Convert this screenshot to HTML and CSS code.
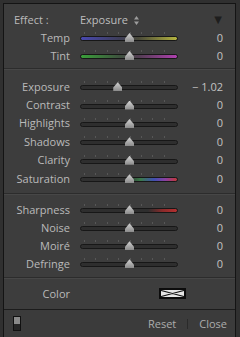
FILE: index.html
```html
<!DOCTYPE html>
<html lang="en">
<head>
    <meta charset="UTF-8">
    <title>Adjustment Brush</title>
    <link rel="stylesheet" href="styles.css">
</head>
<body>
    <div class="panel">
        <div class="section top">
            <div class="row effect">
                <span class="label">Effect :</span>
                <span class="preset">Exposure
                    <svg class="updown" width="5" height="9" viewBox="0 0 5 9">
                        <path d="M2.5 0 L5 3.5 L0 3.5 Z M2.5 9 L5 5.5 L0 5.5 Z" fill="#9c9c9c"/>
                    </svg>
                </span>
                <span class="collapse">&#9660;</span>
            </div>
            <div class="row">
                <span class="label">Temp</span>
                <div class="slider"><div class="track temp"></div><span class="thumb"></span></div>
                <span class="value">0</span>
            </div>
            <div class="row">
                <span class="label">Tint</span>
                <div class="slider"><div class="track tint"></div><span class="thumb"></span></div>
                <span class="value">0</span>
            </div>
        </div>

        <div class="section tone">
            <div class="row">
                <span class="label">Exposure</span>
                <div class="slider"><div class="track"></div><span class="thumb" style="left: 38%"></span></div>
                <span class="value">&minus; 1.02</span>
            </div>
            <div class="row">
                <span class="label">Contrast</span>
                <div class="slider"><div class="track"></div><span class="thumb"></span></div>
                <span class="value">0</span>
            </div>
            <div class="row">
                <span class="label">Highlights</span>
                <div class="slider"><div class="track"></div><span class="thumb"></span></div>
                <span class="value">0</span>
            </div>
            <div class="row">
                <span class="label">Shadows</span>
                <div class="slider"><div class="track"></div><span class="thumb"></span></div>
                <span class="value">0</span>
            </div>
            <div class="row">
                <span class="label">Clarity</span>
                <div class="slider"><div class="track"></div><span class="thumb"></span></div>
                <span class="value">0</span>
            </div>
            <div class="row">
                <span class="label">Saturation</span>
                <div class="slider"><div class="track saturation"></div><span class="thumb"></span></div>
                <span class="value">0</span>
            </div>
        </div>

        <div class="section detail">
            <div class="row">
                <span class="label">Sharpness</span>
                <div class="slider"><div class="track sharpness"></div><span class="thumb"></span></div>
                <span class="value">0</span>
            </div>
            <div class="row">
                <span class="label">Noise</span>
                <div class="slider"><div class="track"></div><span class="thumb"></span></div>
                <span class="value">0</span>
            </div>
            <div class="row">
                <span class="label">Moiré</span>
                <div class="slider"><div class="track"></div><span class="thumb"></span></div>
                <span class="value">0</span>
            </div>
            <div class="row">
                <span class="label">Defringe</span>
                <div class="slider"><div class="track"></div><span class="thumb"></span></div>
                <span class="value">0</span>
            </div>
        </div>

        <div class="section color">
            <div class="row">
                <span class="label">Color</span>
                <div class="swatch">
                    <svg width="23" height="7" viewBox="0 0 23 7">
                        <path d="M0 0.5 L11.5 3.5 L23 0.5 M0 6.5 L11.5 3.5 L23 6.5" stroke="#111" stroke-width="1.2" fill="none"/>
                    </svg>
                </div>
            </div>
        </div>

        <div class="footer">
            <span class="toggle"></span>
            <span class="spacer"></span>
            <span class="btn">Reset</span>
            <span class="divider"></span>
            <span class="btn">Close</span>
        </div>
    </div>
</body>
</html>
```

FILE: styles.css
```css
body {
    margin: 0;
    background-color: #303030;
    font-family: "Open Sans", "DejaVu Sans", sans-serif;
    font-size: 11px;
    color: #bcbcbc;
    overflow: hidden;
}
.panel {
    margin: 3px 4px 0 3px;
    height: 334px;
    box-sizing: border-box;
    border: 1px solid #141414;
    border-bottom: none;
    background-color: #3d3d3d;
    display: flex;
    flex-direction: column;
}
.section {
    border-bottom: 1px solid #2c2c2c;
    box-shadow: 0 1px 0 #474747;
}
.top {
    padding: 6px 0 4px;
}
.tone {
    padding: 8px 0 6px;
}
.tone .row {
    height: 18.4px;
}
.detail {
    padding: 6px 0 5px;
}
.color {
    padding: 6px 0 7px;
    border-bottom: 1px solid #1c1c1c;
    box-shadow: none;
}
.row {
    display: grid;
    grid-template-columns: 66px 98px 1fr;
    column-gap: 10px;
    align-items: center;
    height: 18px;
    padding-right: 12px;
}
.label {
    text-align: right;
    color: #bababa;
}
.value {
    text-align: right;
    color: #c2c2c2;
}
.effect .label {
    text-align: left;
    padding-left: 10px;
}
.preset {
    color: #bebebe;
}
.updown {
    margin-left: 3px;
    vertical-align: -1px;
}
.collapse {
    text-align: right;
    font-size: 10px;
    color: #1e1e1e;
    padding-right: 1px;
}
.slider {
    position: relative;
    height: 10px;
}
.slider::before {
    content: "";
    position: absolute;
    left: 4px;
    right: 3px;
    top: 0;
    height: 2px;
    background: repeating-linear-gradient(to right, #575757 0 1px, transparent 1px 11.4px);
}
.track {
    position: absolute;
    left: 0;
    right: 0;
    top: 4px;
    height: 5px;
    box-sizing: border-box;
    border: 1px solid #171717;
    border-radius: 3px;
    background-color: #2e2e2e;
}
.track.temp {
    background: linear-gradient(to right, #4848b0, #3e3e58 40%, #4a4a3a 60%, #b4b440);
}
.track.tint {
    background: linear-gradient(to right, #3aa03a, #3e523e 40%, #523e52 60%, #b040b0);
}
.track.saturation {
    background: linear-gradient(to right, #303030 48%, #3a7a4a 62%, #4050b0 76%, #8a40a0 88%, #c03838);
}
.track.sharpness {
    background: linear-gradient(to right, #2e2e2e 70%, #8a2a2a 85%, #b43030);
}
.thumb {
    position: absolute;
    left: 50%;
    top: 1px;
    width: 9px;
    height: 9px;
    margin-left: -4px;
    background: linear-gradient(#d4d4d4, #8a8a8a);
    clip-path: polygon(50% 0, 100% 60%, 100% 100%, 0 100%, 0 60%);
}
.swatch {
    grid-column: 2;
    justify-self: end;
    margin-right: -8px;
    width: 27px;
    height: 11px;
    box-sizing: border-box;
    border: 2px solid #0c0c0c;
    background-color: #e6e6e6;
    display: flex;
}
.footer {
    flex: 1;
    display: flex;
    align-items: center;
    padding: 0 8px 0 9px;
    background-color: #3b3b3b;
    color: #acacac;
}
.toggle {
    width: 8px;
    height: 15px;
    box-sizing: border-box;
    border: 1px solid #111;
    background: linear-gradient(#8a8a8a 50%, #262626 50%);
}
.spacer {
    flex: 1;
}
.divider {
    width: 1px;
    height: 10px;
    background-color: #2a2a2a;
    margin: 0 11px;
}
```
